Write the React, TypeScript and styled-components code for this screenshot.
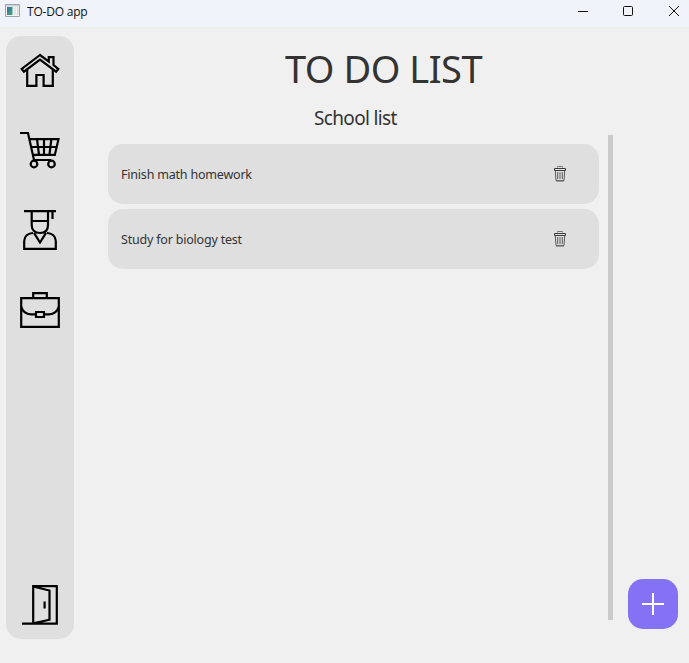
import React from "react";
import styled, { createGlobalStyle } from "styled-components";

const GlobalStyle = createGlobalStyle`
  * { box-sizing: border-box; }
  body { margin: 0; background: #f0f0f0; font-family: "Noto Sans", "Open Sans", sans-serif; }
  button { border: 0; padding: 0; background: none; font: inherit; }
  svg { display: block; }
`;

const Window = styled.div`
  display: flex;
  flex-direction: column;
  width: 689px;
  height: 663px;
  overflow: hidden;
  background: #f0f0f0;
`;

const TitleBar = styled.header`
  display: flex;
  align-items: center;
  flex: 0 0 27px;
  padding: 0 9px 5px 5px;
  background: #f0f3fa;
`;

const AppName = styled.span`
  margin-left: 6px;
  padding-top: 2px;
  flex: 1;
  font-family: "Open Sans", sans-serif;
  font-size: 12px;
  line-height: 20px;
  letter-spacing: -0.2px;
  color: #111;
`;

const WindowControls = styled.div`
  display: flex;
  gap: 33px;
`;

const Body = styled.div`
  display: flex;
  flex: 1;
  padding: 9px 11px 24px 6px;
`;

const Sidebar = styled.nav`
  display: flex;
  flex-direction: column;
  align-items: center;
  gap: 40px;
  width: 68px;
  padding: 14px 0;
  border-radius: 15px;
  background: #dfdfdf;
`;

const NavButton = styled.button<{ $last?: boolean }>`
  width: 40px;
  height: 40px;
  margin-top: ${(p) => (p.$last ? "auto" : "0")};
`;

const Main = styled.main`
  display: flex;
  flex-direction: column;
  width: 505px;
  margin-left: 34px;
`;

const Title = styled.h1`
  margin: 7px 0 0 177px;
  font-size: 38px;
  font-weight: 400;
  line-height: 50px;
  letter-spacing: -0.5px;
  white-space: nowrap;
  color: #333;
`;

const Subtitle = styled.h2`
  margin: 11px 0 0 206px;
  font-size: 19px;
  font-weight: 400;
  line-height: 28px;
  letter-spacing: -0.65px;
  color: #333;
`;

const ScrollArea = styled.section`
  display: flex;
  justify-content: space-between;
  height: 485px;
  margin-top: 3px;
`;

const List = styled.ul`
  display: flex;
  flex-direction: column;
  gap: 5px;
  width: 491px;
  margin: 0;
  padding: 9px 0 0;
  list-style: none;
`;

const Task = styled.li`
  display: flex;
  align-items: center;
  justify-content: space-between;
  height: 60px;
  padding: 0 32px 0 13px;
  border-radius: 15px;
  background: #dfdfdf;
`;

const TaskText = styled.span`
  padding-top: 2px;
  font-size: 12.5px;
  line-height: 18px;
  letter-spacing: -0.2px;
  color: #333;
`;

const ScrollBar = styled.div`
  width: 5px;
  background: #cbcbcb;
`;

const AddButton = styled.button`
  display: grid;
  place-items: center;
  align-self: flex-end;
  width: 50px;
  height: 50px;
  margin: 0 0 10px auto;
  border-radius: 15px;
  background: #8471f4;
`;

const LineIcon = styled.svg.attrs({ viewBox: "0 0 40 40" })`
  width: 40px;
  height: 40px;
  fill: none;
  stroke: #000;
  stroke-width: 2.2;
`;

const AppIcon = () => (
  <svg width="16" height="16" viewBox="0 0 16 16">
    <defs>
      <linearGradient id="pane" x1="0" y1="0" x2="1" y2="1">
        <stop stopColor="#396fa8" />
        <stop offset="1" stopColor="#4aa774" />
      </linearGradient>
    </defs>
    <path d="M.5 1.5h14v12H.5z" fill="#f4f5f6" stroke="#9aa5ad" />
    <path d="M1 2h13v1.5H1z" fill="#cbd2d8" />
    <path d="M2 4h5.500v8H2z" fill="url(#pane)" />
    <path d="M8.500 4H11v8H8.500z" fill="#e3e6ea" />
    <path d="M12 4h1.500v8H12z" fill="#d2dbd8" />
  </svg>
);

const Home = () => (
  <LineIcon>
    <path d="M20 5 1.700 19l2.200 2.700L20 9.700l16.100 12 2.200-2.700-4.800-4V7.200h-4.700v4.400z" />
    <path d="M7.200 20v15.800h9.200V25h7.200v10.800h9.200V20" />
  </LineIcon>
);

const Cart = () => (
  <LineIcon>
    <path d="M0 3h8l6 27h17M9.500 9.200h29l-3.700 15.700H13.200M11 17h26M17 9l2 16M24 9v16M31.400 9l-2 16" />
    <circle cx="14" cy="34" r="3.300" />
    <circle cx="31.500" cy="34" r="3.300" />
  </LineIcon>
);

const Graduate = () => (
  <LineIcon>
    <path d="M4 1.200h32M32.500 1.200V9M11.700 1v14c0 5 3.200 8 8.300 8s8-3 8-8V1M11.500 11H28M13 23c-5 0-8.800 3.500-8.800 8v7.800h31.600V31c0-4.500-3.800-8-8.800-8M14 22.800l6 9.700 6-9.700" />
  </LineIcon>
);

const Briefcase = () => (
  <LineIcon>
    <path d="M1.200 8.200h37.600v28.600H1.200zM13.200 8V3.200h13.600V8M1 16c1.500 5.500 4.500 8.300 10 8.300h5M24 24.300h5c5.500 0 8.500-2.800 10-8.300M16 22h8v5h-8z" />
  </LineIcon>
);

const Door = () => (
  <LineIcon>
    <path d="M2 38.600h34.800V1.200H13.200v37.200l16.300-3.700V5.500L13 1.500M24.600 16.500v7" />
  </LineIcon>
);

const Trash = () => (
  <svg width="14" height="18" viewBox="0 0 14 18" fill="none" stroke="#3c3c3c">
    <path d="M4.500 2.500v-1h5v1" stroke="#777" />
    <path d="M1.500 3.500h11v2h-11z" fill="#dfdfdf" />
    <path d="M2.300 6 3 15.500h8l.7-9.500" stroke="#5c5c5c" />
    <path d="M3 16.300h8" stroke="#888" />
    <path d="M4.700 7v7M7 7v7M9.300 7v7" stroke="#5c5c5c" />
  </svg>
);

const tasks = ["Finish math homework", "Study for biology test"];

export default function App() {
  return (
    <Window>
      <GlobalStyle />
      <TitleBar>
        <AppIcon />
        <AppName>TO-DO app</AppName>
        <WindowControls>
          <svg width="12" height="12" viewBox="0 0 12 12">
            <path d="M0 6.500h10" stroke="#111" />
          </svg>
          <svg width="12" height="12" viewBox="0 0 12 12">
            <rect x=".5" y="1.500" width="9" height="9" rx="1" fill="none" stroke="#111" />
          </svg>
          <svg width="12" height="12" viewBox="0 0 12 12">
            <path d="m1 1 10 10M11 1 1 11" stroke="#111" />
          </svg>
        </WindowControls>
      </TitleBar>
      <Body>
        <Sidebar>
          <NavButton aria-label="Home"><Home /></NavButton>
          <NavButton aria-label="Shopping"><Cart /></NavButton>
          <NavButton aria-label="School"><Graduate /></NavButton>
          <NavButton aria-label="Work"><Briefcase /></NavButton>
          <NavButton aria-label="Exit" $last><Door /></NavButton>
        </Sidebar>
        <Main>
          <Title>TO DO LIST</Title>
          <Subtitle>School list</Subtitle>
          <ScrollArea>
            <List>
              {tasks.map((task) => (
                <Task key={task}>
                  <TaskText>{task}</TaskText>
                  <button aria-label="Delete"><Trash /></button>
                </Task>
              ))}
            </List>
            <ScrollBar />
          </ScrollArea>
        </Main>
        <AddButton aria-label="Add">
          <svg width="22" height="22" viewBox="0 0 22 22">
            <path d="M11 0v22M0 11h22" stroke="#fff" strokeWidth="2" />
          </svg>
        </AddButton>
      </Body>
    </Window>
  );
}
